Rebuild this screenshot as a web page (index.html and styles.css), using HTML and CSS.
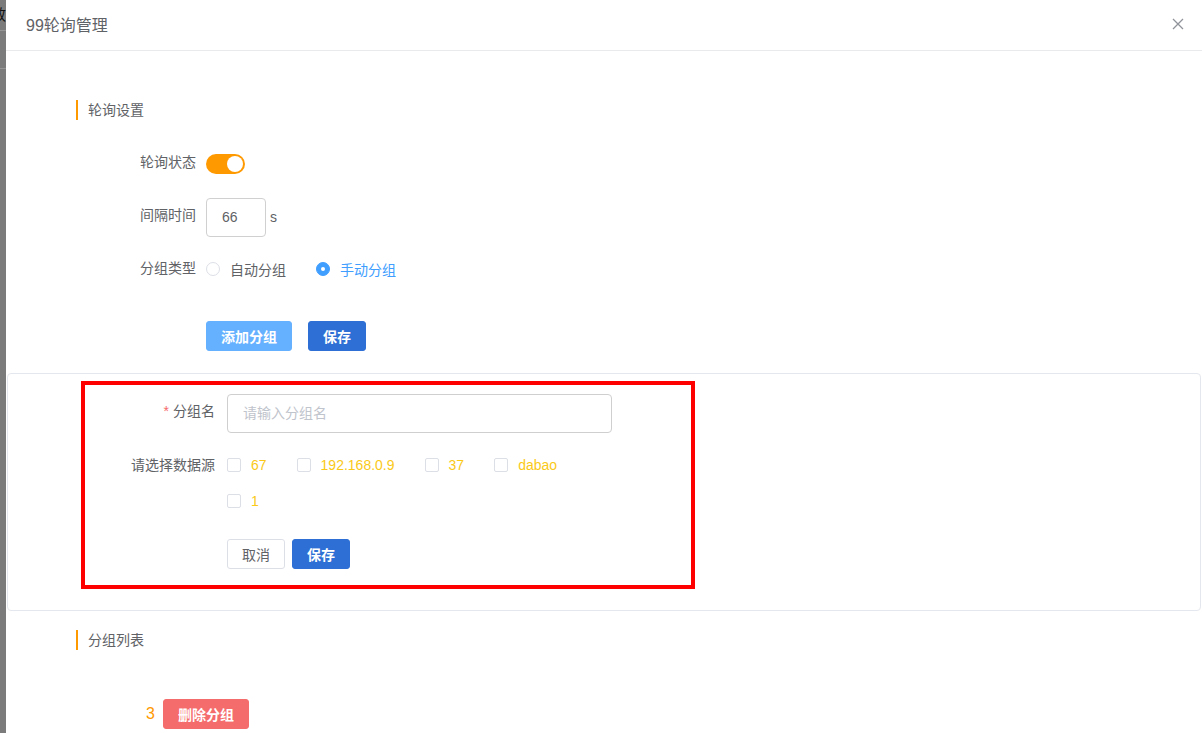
FILE: index.html
```html
<!DOCTYPE html>
<html lang="zh-CN">
<head>
    <meta charset="UTF-8">
    <title>99轮询管理</title>
    <link rel="stylesheet" href="styles.css">
</head>
<body>
    <div class="page">
        <div class="backdrop">
            <span class="backdrop-text">效</span>
            <span class="backdrop-line line-1"></span>
            <span class="backdrop-line line-2"></span>
        </div>

        <div class="dialog">
            <div class="dialog-header">
                <span class="dialog-title">99轮询管理</span>
                <span class="dialog-close">
                    <svg width="12" height="12" viewBox="0 0 12 12">
                        <path d="M1 1 L11 11 M11 1 L1 11" stroke="#909399" stroke-width="1.3" fill="none"/>
                    </svg>
                </span>
            </div>

            <div class="dialog-body">
                <div class="section-title">轮询设置</div>

                <div class="settings">
                    <div class="form-row">
                        <label class="form-label">轮询状态</label>
                        <div class="switch on"><span class="switch-knob"></span></div>
                    </div>
                    <div class="form-row">
                        <label class="form-label">间隔时间</label>
                        <div class="input small">66</div>
                        <span class="unit">s</span>
                    </div>
                    <div class="form-row">
                        <label class="form-label">分组类型</label>
                        <div class="radio-group">
                            <span class="radio"><span class="radio-dot"></span>自动分组</span>
                            <span class="radio checked"><span class="radio-dot"></span>手动分组</span>
                        </div>
                    </div>
                    <div class="actions">
                        <button class="btn btn-light">添加分组</button>
                        <button class="btn btn-primary">保存</button>
                    </div>
                </div>

                <div class="group-card">
                    <div class="group-row name-row">
                        <label class="group-label"><span class="required">*</span>分组名</label>
                        <div class="input wide placeholder">请输入分组名</div>
                    </div>
                    <div class="group-row source-row">
                        <label class="group-label">请选择数据源</label>
                        <div class="checkbox-group">
                            <span class="checkbox"><span class="checkbox-box"></span>67</span>
                            <span class="checkbox"><span class="checkbox-box"></span>192.168.0.9</span>
                            <span class="checkbox"><span class="checkbox-box"></span>37</span>
                            <span class="checkbox"><span class="checkbox-box"></span>dabao</span>
                            <span class="checkbox"><span class="checkbox-box"></span>1</span>
                        </div>
                    </div>
                    <div class="group-actions">
                        <button class="btn btn-default">取消</button>
                        <button class="btn btn-primary">保存</button>
                    </div>

                    <div class="annotation"></div>
                </div>

                <div class="section-title second">分组列表</div>

                <div class="list-toolbar">
                    <span class="count">3</span>
                    <button class="btn btn-danger">删除分组</button>
                </div>
            </div>
        </div>
    </div>
</body>
</html>
```

FILE: styles.css
```css
* {
    margin: 0;
    padding: 0;
    box-sizing: border-box;
}

body {
    font-family: "Liberation Sans", "Noto Sans CJK SC", sans-serif;
    font-size: 14px;
    color: #606266;
    background: #fff;
    height: 733px;
    overflow: hidden;
}

.page {
    display: flex;
    height: 733px;
}

/* dimmed page behind the dialog */
.backdrop {
    width: 6px;
    background: #7b7b7b;
    position: relative;
    overflow: hidden;
    flex-shrink: 0;
}

.backdrop-text {
    position: absolute;
    left: -9px;
    top: 3px;
    font-size: 15px;
    color: #111;
}

.backdrop-line {
    position: absolute;
    left: 0;
    width: 6px;
    height: 1px;
    background: #959595;
}

.line-1 { top: 30px; }
.line-2 { top: 68px; }

.dialog {
    flex: 1;
    background: #fff;
    position: relative;
}

.dialog-header {
    height: 51px;
    border-bottom: 1px solid #e8eaec;
    display: flex;
    align-items: center;
    justify-content: space-between;
    padding: 0 18px 2px 20px;
}

.dialog-title {
    font-size: 16px;
    color: #5f6266;
}

.dialog-close {
    display: flex;
    width: 12px;
    height: 12px;
}

.section-title {
    margin: 49px 0 0 70px;
    height: 20px;
    line-height: 20px;
    border-left: 2px solid #ff9900;
    padding-left: 10px;
    color: #606266;
}

.section-title.second {
    margin-top: 19px;
}

.settings {
    padding: 24px 0 0 134px;
}

.form-row {
    display: flex;
    align-items: center;
    height: 40px;
    margin-bottom: 13px;
}

.form-label {
    width: 66px;
    align-self: flex-start;
    line-height: 36px;
    color: #606266;
}

.switch {
    width: 39px;
    height: 20px;
    border-radius: 10px;
    background: #dcdfe6;
    position: relative;
}

.switch.on {
    background: #ff9900;
}

.switch-knob {
    position: absolute;
    top: 2px;
    right: 2px;
    width: 16px;
    height: 16px;
    border-radius: 50%;
    background: #fff;
}

.input {
    height: 39px;
    line-height: 37px;
    border: 1px solid #d0d0d0;
    border-radius: 4px;
    padding: 0 15px;
    color: #606266;
}

.input.small {
    width: 60px;
}

.input.wide {
    width: 385px;
    border-color: #cfcfcf;
}

.input.placeholder {
    color: #c0c4cc;
}

.unit {
    margin-left: 4px;
    color: #606266;
}

.radio-group {
    display: flex;
    gap: 30px;
    margin-top: -2px;
}

.radio {
    display: flex;
    align-items: center;
    gap: 10px;
    color: #606266;
}

.radio-dot {
    width: 14px;
    height: 14px;
    border-radius: 50%;
    border: 1px solid #dcdfe6;
    background: #fff;
    position: relative;
}

.radio.checked {
    color: #409eff;
}

.radio.checked .radio-dot {
    background: #409eff;
    border-color: #409eff;
}

.radio.checked .radio-dot::after {
    content: "";
    position: absolute;
    left: 4px;
    top: 4px;
    width: 4px;
    height: 4px;
    border-radius: 50%;
    background: #fff;
}

.actions {
    display: flex;
    gap: 16px;
    margin-top: 31px;
    padding-left: 66px;
}

.btn {
    height: 30px;
    padding: 0 14px;
    border: 1px solid transparent;
    border-radius: 3px;
    font-family: inherit;
    font-size: 14px;
    font-weight: bold;
    color: #fff;
    cursor: pointer;
}

.btn-light {
    background: #66b1ff;
    border-color: #66b1ff;
}

.btn-primary {
    background: #2d6fd4;
    border-color: #2d6fd4;
}

.btn-default {
    background: #fff;
    border-color: #dcdfe6;
    color: #606266;
    font-weight: normal;
    padding: 0 14px;
}

.btn-danger {
    background: #f56c6c;
    border-color: #f56c6c;
}

.group-card {
    position: relative;
    margin: 22px 1px 0;
    border: 1px solid #e4e7ed;
    border-radius: 4px;
    padding: 20px 0 41px;
}

.group-row {
    display: flex;
}

.group-label {
    width: 219px;
    padding-right: 12px;
    text-align: right;
    color: #606266;
}

.name-row .group-label {
    line-height: 34px;
}

.required {
    color: #f56c6c;
    margin-right: 4px;
}

.source-row {
    margin-top: 14px;
}

.source-row .group-label {
    line-height: 36px;
}

.checkbox-group {
    width: 385px;
    display: flex;
    flex-wrap: wrap;
}

.checkbox {
    display: flex;
    align-items: center;
    gap: 10px;
    height: 36px;
    margin-right: 30px;
    color: #fac918;
}

.checkbox-box {
    width: 14px;
    height: 14px;
    border: 1px solid #dcdfe6;
    border-radius: 2px;
    background: #fff;
}

.group-actions {
    display: flex;
    gap: 7px;
    margin: 20px 0 0 219px;
}

/* red highlight drawn over the form */
.annotation {
    position: absolute;
    left: 73px;
    top: 7px;
    width: 614px;
    height: 208px;
    border: 4px solid #ff0000;
    pointer-events: none;
}

.list-toolbar {
    display: flex;
    align-items: center;
    gap: 8px;
    margin: 49px 0 0 140px;
}

.count {
    font-size: 16px;
    color: #ff9900;
}
```
